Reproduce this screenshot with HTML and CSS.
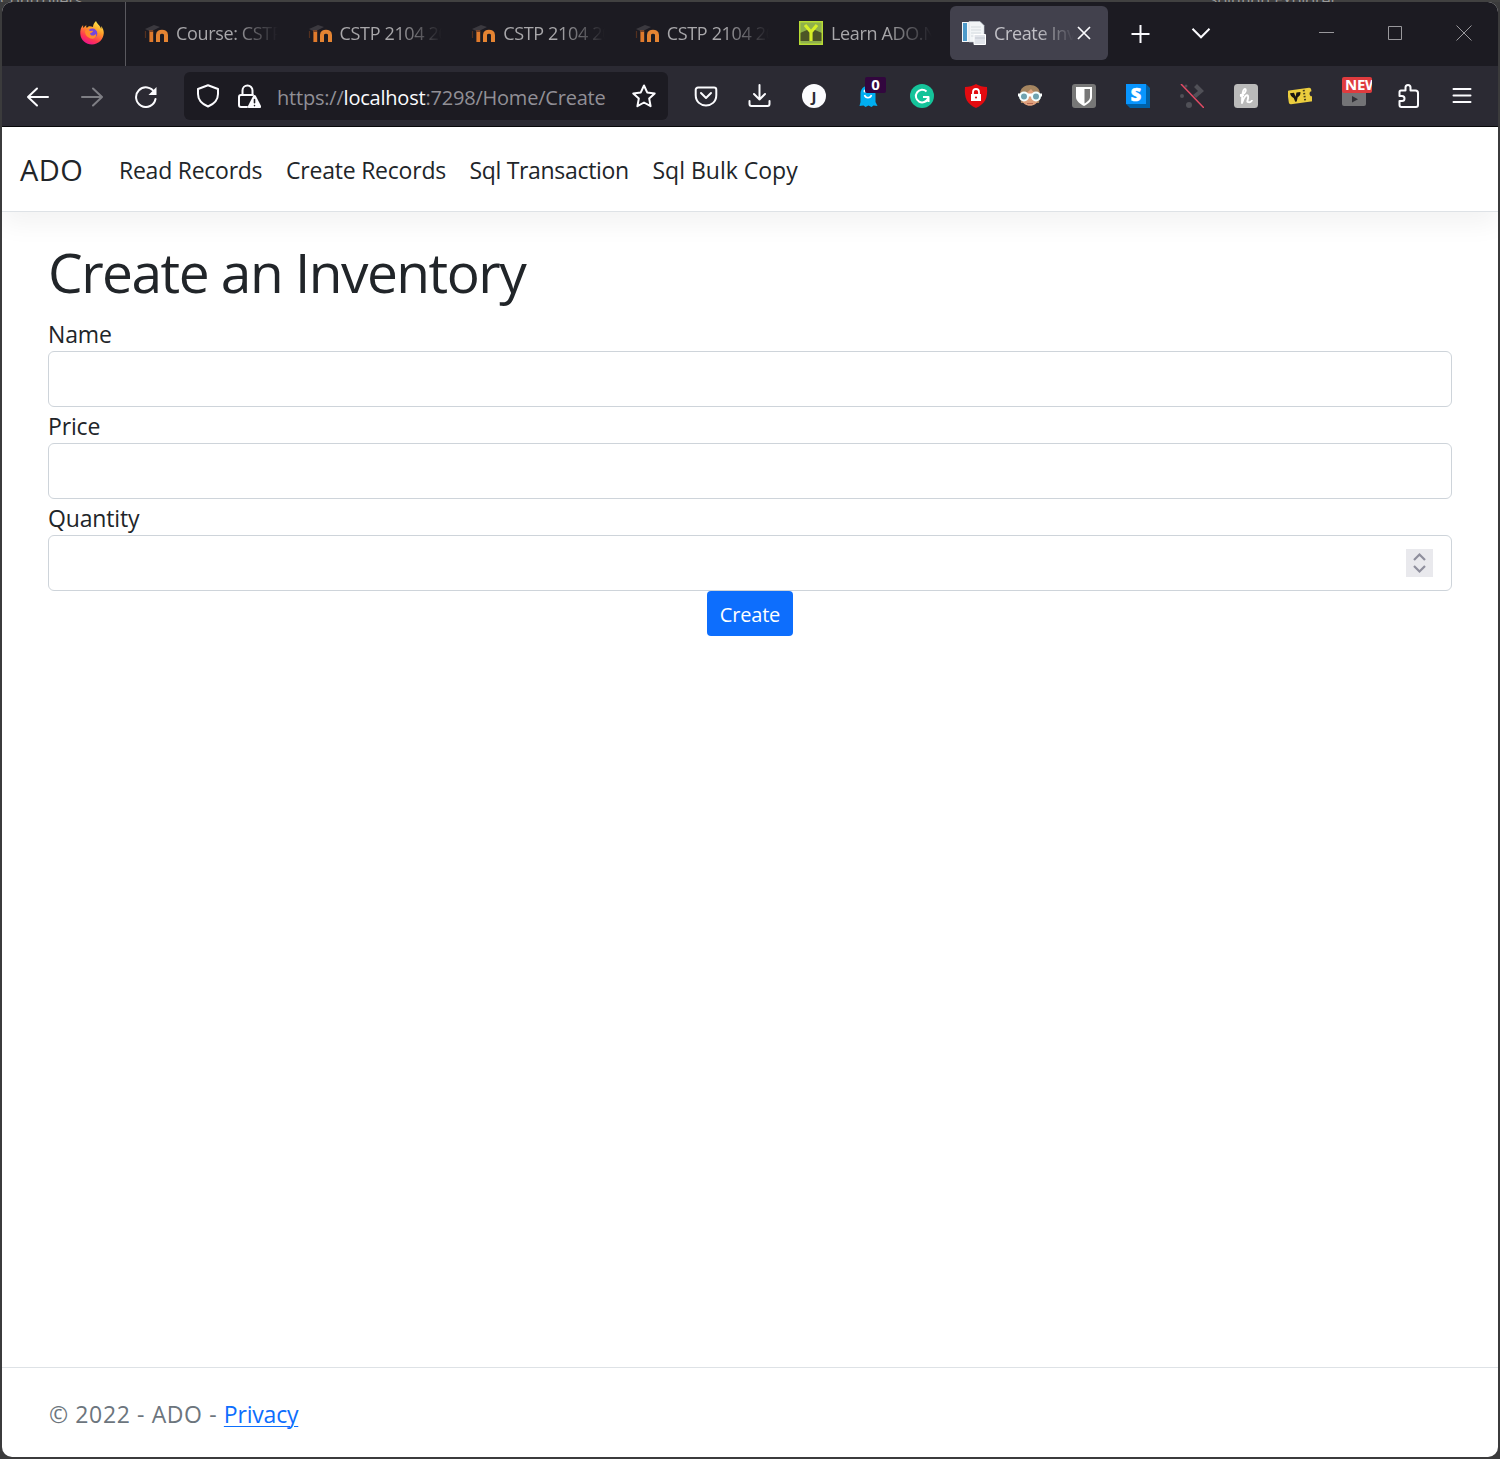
FILE: index.html
```html
<!DOCTYPE html>
<html lang="en">
<head>
<meta charset="utf-8">
<title>Create Inventory - ADO</title>
<link rel="stylesheet" href="styles.css">
</head>
<body>
<svg class="defs" width="0" height="0" aria-hidden="true">
  <symbol id="moodle" viewBox="0 0 24 24">
    <path d="M1 8 10 4l6 2-6 3-5 1z" fill="#3b393f"/><path d="M1.500 10v7" stroke="#54301f" stroke-width="1.200"/><path d="M7.300 10.500V21" stroke="#e07a2c" stroke-width="3.800"/><path d="M5 10h4.200" stroke="#7a4528" stroke-width="2"/>
    <path d="M14 21v-7c0-4.500 8-4.500 8 0v7" fill="none" stroke="#e58432" stroke-width="4"/>
  </symbol>
</svg>
<div class="desktop">
<div class="behind"><span>Controllers</span><span class="behind-right">Solution Explorer</span></div>
<div class="window">
  <div class="tabbar">
    <div class="pinned">
      <svg width="24" height="24" viewBox="0 0 24 24"><defs><linearGradient id="fx" x1=".8" y1="0" x2=".3" y2="1"><stop stop-color="#fff44f"/><stop offset=".4" stop-color="#ff9a28"/><stop offset=".75" stop-color="#ff3750"/><stop offset="1" stop-color="#eb1191"/></linearGradient></defs><path d="M16 0c-2 2-3 4-3 6-3-1-5-1-6 1-1-1-1-2-.5-3C5 5 4 6 3.500 7 3 6 3 5 3.200 4 1 6 0 9 .3 13c.5 6 5.500 10.500 11.700 10.500S23.500 18.500 23.800 12c0-3-1-5-2.800-7 .3 1 .4 2 .2 3C20 4 17 3 16 0z" fill="url(#fx)"/><circle cx="12.300" cy="12.500" r="5" fill="#7646dc"/><path d="M5 10c2-2 4-1 5 0l3-.3c0 2-3 2-3 3 1 3 5 2 6 0 1 5-4 6-7 4-3-1-4-4-4-6.700z" fill="#ff8b2b"/></svg>
    </div>
    <div class="tabs">
      <div class="tab"><svg class="fav"><use href="#moodle"/></svg><span>Course: CSTP 2104</span></div>
      <div class="tab"><svg class="fav"><use href="#moodle"/></svg><span>CSTP 2104 2022</span></div>
      <div class="tab"><svg class="fav"><use href="#moodle"/></svg><span>CSTP 2104 2022</span></div>
      <div class="tab"><svg class="fav"><use href="#moodle"/></svg><span>CSTP 2104 2022</span></div>
      <div class="tab learn"><svg class="fav" viewBox="0 0 24 24"><path fill="#8fb04c" d="M0 0h24v24H0z"/><path fill="#4c5526" d="M1 12 8 9h8l7 3v8H1z"/><path d="M6 4l6 7 6-7M12 10v10" fill="none" stroke="#d7ef27" stroke-width="3.200"/><path fill="none" stroke="#b8dc34" stroke-width="1.500" d="M.7.7h22.600v22.600H.7z"/></svg><span>Learn ADO.NET</span></div>
      <div class="tab active"><svg class="fav" viewBox="0 0 24 24"><path fill="#f5f8fa" d="M0 1h13v20H0z"/><path fill="#4d9aca" d="M1 2h4v18H1z"/><path fill="#f2f5f7" stroke="#c9d2d8" stroke-width=".6" d="M7 .5h11l4 4V21H7z"/><path stroke="#d5dbdf" d="M9 6h10M9 9h10M9 12h10M9 15h4"/><path fill="#e1e4ea" stroke="#fff" d="M12 13.500h11.500v10H12z"/><path stroke="#c3c8d0" d="M13 17h10"/></svg><span class="short">Create Inventory</span><svg class="tab-close" viewBox="0 0 14 14"><path d="M1 1l12 12M13 1 1 13"/></svg></div>
    </div>
    <div class="tab-tools"><svg width="20" height="20" viewBox="0 0 20 20"><path d="M10.500 1v18M1.500 10h18"/></svg><svg width="20" height="12" viewBox="0 0 20 12"><path d="m1.500 .8 8.500 8.500 8.500-8.500"/></svg></div>
    <div class="controls">
      <svg viewBox="0 0 16 16"><path d="M1 6.500h15"/></svg><svg viewBox="0 0 16 16"><path d="M1.500 .5h13v13h-13z"/></svg><svg viewBox="0 0 16 16"><path d="m.5-.5 15 15m0-15-15 15"/></svg>
    </div>
  </div>
  <div class="toolbar">
    <div class="cells">
      <svg viewBox="0 0 24 24"><path d="M22 13H2m9-8.500L2 13l9 8.500"/></svg>
      <svg class="dim" viewBox="0 0 24 24"><path d="M2 13h20m-9-8.500 9 8.500-9 8.500"/></svg>
      <svg viewBox="0 0 24 24"><path d="M20.500 8.500A9.800 9.800 0 1 0 21.500 15"/><path class="solid" d="M22.500 3v8H14.500z"/></svg>
    </div>
    <div class="url">
      <svg viewBox="0 0 24 24"><path d="M12 1.300 22 5v5c0 6-4 10-10 12.500C6 20 2 16 2 10V5z"/></svg>
      <svg viewBox="0 0 24 24"><path d="M5.500 11V6.500a5 5 0 0 1 10 0V11M10 23H4a2 2 0 0 1-2-2v-8a2 2 0 0 1 2-2h12"/><path class="solid" d="M17.500 11c.6 0 1 .3 1.300.8L24 22c.6 1.200 0 2-1 2H12c-1 0-1.600-.8-1-2l5.200-10.200c.3-.5.700-.8 1.300-.8z"/><path d="M17.500 15.500v3.300m0 2.700v.1" stroke="#1c1b22" stroke-width="1.600"/></svg>
      <span class="address">https://<b>localhost</b>:7298/Home/Create</span>
      <svg viewBox="0 0 24 24"><path d="m12 1.500 3.200 6.900 7.500 1-5.500 5.200 1.400 7.600-6.600-3.700-6.600 3.700 1.400-7.600L1.300 9.400l7.500-1z"/></svg>
    </div>
    <div class="cells">
      <svg viewBox="0 0 24 24"><path d="M4 3.500h16a2.300 2.300 0 0 1 2.300 2.300V11c0 14-20.600 14-20.600 0V5.800A2.300 2.300 0 0 1 4 3.500z"/><path d="m7 9 5 5 5-5"/></svg>
      <svg viewBox="0 0 24 24"><path d="M11.500 1v14.500M6 10l5.500 5.500L17 10M1.500 17v3a2 2 0 0 0 2 2h16a2 2 0 0 0 2-2v-3"/></svg>
      <span class="round-j">J</span>
      <span class="badged"><svg class="art" viewBox="0 0 24 24"><path d="M4.500 10c0-11 15-11 15 0v8l2 4-4-.5-2 1.500-3-1.500-3 1.500-2-1.500-4 .5 1-4z" fill="#00aef0"/><path d="M8.500 11c1 3.500 6 3.500 7 0" stroke="#fff" stroke-width="1.500" fill="none"/><circle cx="9" cy="7" r="1.500" fill="#fff"/></svg><em class="count">0</em></span>
      <svg class="art" viewBox="0 0 24 24"><circle cx="12" cy="12" r="12" fill="#15c39a"/><path d="M16.500 7.500a6.300 6.300 0 1 0 1.500 7M13 13h5.500v5" fill="none" stroke="#fff" stroke-width="2"/></svg>
      <svg class="art" viewBox="0 0 24 24"><path d="M12 0c3 2 7 3 11 3 1 11-2 17-11 21C3 20 0 14 1 3c4 0 8-1 11-3z" fill="#e30b10"/><path fill="#fff" d="M7 10h10v7H7z"/><path d="M9 10V8c0-4 6-4 6 0v2" fill="none" stroke="#fff" stroke-width="1.800"/><circle cx="12" cy="13.500" r="1.100" fill="#d51318"/></svg>
      <svg class="art" viewBox="0 0 24 24"><path d="M2 10C2-2 22-2 22 10l-1 9H3z" fill="#a58560"/><path d="M4 10c5-1 7-3 9-5 2 3 5 4 7 5v5c0 9-16 9-16 0z" fill="#dfa17d"/><path d="M0 11h24" stroke="#fff" stroke-width="3"/><circle cx="6" cy="12.500" r="4" fill="#6fa3b0" stroke="#f4ffff" stroke-width="2"/><circle cx="18" cy="12.500" r="4" fill="#6fa3b0" stroke="#f4ffff" stroke-width="2"/><path d="M9 19.500h6" stroke="#b86a52" stroke-width="1.200"/></svg>
      <svg class="art" viewBox="0 0 24 24"><rect width="24" height="24" rx="3" fill="#777"/><path d="M4 3h16v10c0 4-4 7-8 9-4-2-8-5-8-9z" fill="#fff"/><path d="M12.500 5H18v8c0 3-3 5-5.500 6.500z" fill="#777"/></svg>
      <svg class="art" viewBox="0 0 24 24"><path d="m20 0 4 4v20H4l-4-4z" fill="#0061a8"/><path d="M0 0h20v20H0z" fill="#0895ff"/><text x="10" y="16.500" text-anchor="middle" class="letter-s">S</text></svg>
      <svg class="art" viewBox="0 0 24 24"><g fill="#505057"><circle cx="2" cy="12" r="2"/><circle cx="6" cy="2" r="1.500"/><circle cx="9" cy="21" r="3"/><path d="m14 3 3-3 7 7-8 7-3-3 5-4z"/></g><path d="m1 0 23 24" stroke="#e44b65" stroke-width="1.500"/></svg>
      <svg class="art" viewBox="0 0 24 24"><rect width="24" height="24" rx="3.500" fill="#bababa"/><path d="M6 11c5 0 7-6 5-6-3 0-3 9-3 14 2-7 5-9 6-7 1 3-2 6 0 6 2 1 4-1 4-2M6 12l4-1" fill="none" stroke="#fff" stroke-width="1.900"/></svg>
      <svg class="art" viewBox="0 0 24 24"><g transform="rotate(-8 12 12)"><path d="M2 5h20a2 2 0 0 1 2 2v2c-3 0-3 5 0 5v3a2 2 0 0 1-2 2H2a2 2 0 0 1-2-2V7a2 2 0 0 1 2-2z" fill="#ebcd3e"/><path d="M16.500 6.500v11" stroke="#4b411b" stroke-dasharray="1.500 1.500"/><path d="M2.500 8h4l1 4 1.500-4h4c0 3-2 4-3.500 5L8 17H6.500l-1-4C4 12 2.500 11 2.500 8z" fill="#1b1713"/></g></svg>
      <span class="badged"><svg class="art" viewBox="0 0 24 24"><rect y="6" width="24" height="16" rx="2" fill="#737376"/><path d="m10 12 6 3.200-6 3.300z" fill="#303036"/></svg><em class="new">NEW</em></span>
      <svg viewBox="0 0 24 24"><path d="M3.500 10V8A1.500 1.500 0 0 1 5 6.500h4.500V3.500a2.500 2.500 0 0 1 5 0v3h5A2.500 2.500 0 0 1 22 9v12a2 2 0 0 1-2 2H5.500a2 2 0 0 1-2-2v-4H6a2.500 2.500 0 0 0 0-5H3.500z"/></svg>
      <svg viewBox="0 0 24 24"><path d="M3.500 5h17M3.500 11.500h17M3.500 18h17"/></svg>
    </div>
  </div>
  <div class="page">
    <nav class="navbar">
      <a class="brand">ADO</a>
      <a class="link read">Read Records</a><a class="link create">Create Records</a><a class="link trans">Sql Transaction</a><a class="link bulk">Sql Bulk Copy</a>
    </nav>
    <main>
      <h1>Create an Inventory</h1>
      <form>
        <label>Name</label><div class="field"></div>
        <label>Price</label><div class="field"></div>
        <label>Quantity</label><div class="field"><svg class="spinner" viewBox="0 0 27 28"><path d="m8 11 5.500-5.500L19 11M8 17l5.500 5.500L19 17"/></svg></div>
        <button type="button">Create</button>
      </form>
    </main>
    <footer><span class="copy">© 2022 - ADO - </span><a>Privacy</a></footer>
  </div>
</div>
</div>
</body>
</html>
```
FILE: styles.css
```css
* { box-sizing: border-box; }
body { margin: 0; font-family: "Open Sans", "Noto Sans", sans-serif; color: #212529; }
svg { display: block; flex: none; }
.defs { display: none; }
.desktop { height: 1459px; background: #3b3b3c; padding: 0 2px 2px; overflow: hidden; }
.behind { height: 2px; margin: 0 -2px; overflow: hidden; display: flex; justify-content: space-between; font-size: 16px; line-height: 0; color: #999; background: #414141; }
.behind-right { margin-right: 163px; }
.window { height: 1455px; border-radius: 10px; overflow: hidden; display: flex; flex-direction: column; background: #fff; }

.tabbar { height: 64px; background: #1c1b22; display: flex; }
.pinned { width: 124px; border-right: 1px solid #5a595f; padding: 19px 0 0 78px; }
.tabs { display: flex; padding: 4px 0 0 6px; }
.tab { width: 158px; height: 54px; margin-right: 5.6px; border-radius: 6px; padding: 0 12px; display: flex; align-items: center; color: #a8a7aa; }
.fav { width: 24px; height: 24px; margin-right: 8px; }
.learn { padding-left: 12.6px; }
.tab span { width: 102px; overflow: hidden; white-space: nowrap; font-size: 18px; letter-spacing: -0.35px; -webkit-mask-image: linear-gradient(90deg, #000 55%, transparent 100%); mask-image: linear-gradient(90deg, #000 55%, transparent 100%); }
.tab.active { background: #42414d; color: #c1c0c6; margin-right: 0; }
.tab span.short { width: 80px; flex: none; }
.tab-close { width: 14px; height: 14px; margin-left: 3px; fill: none; stroke: #fbfbfe; stroke-width: 1.7; }
.tab-tools { display: flex; align-items: center; gap: 41px; margin-left: 22px; fill: none; stroke: #fbfbfe; stroke-width: 2; }
.controls { display: flex; align-items: center; gap: 53px; margin: 0 26px 0 auto; }
.controls svg { width: 16px; height: 16px; fill: none; stroke: #99989c; overflow: visible; }

.toolbar { height: 61px; background: #2b2a33; border-bottom: 1px solid #09090b; display: flex; align-items: center; padding-left: 9px; }
.cells { display: flex; }
.cells > * { width: 24px; height: 24px; margin: 0 15px; flex: none; }
.toolbar svg { fill: none; stroke: #fbfbfe; stroke-width: 2; stroke-linecap: round; stroke-linejoin: round; }
.toolbar svg.art { stroke: none; stroke-linecap: butt; }
.toolbar .solid { fill: #fbfbfe; stroke: none; }
.toolbar .dim { opacity: .4; }
.url { width: 484px; height: 48px; margin: 0 11px; padding: 0 12px; background: #1c1b22; border-radius: 6px; display: flex; align-items: center; }
.url svg { width: 24px; height: 24px; margin-right: 17px; }
.url svg:last-child { margin: 0 0 0 auto; }
.address { font-size: 20px; white-space: nowrap; color: #918f96; margin-left: -1px; padding-top: 2px; letter-spacing: -0.21px; }
.address b { font-weight: 400; color: #fbfbfe; }
.round-j { border-radius: 50%; background: #fbfbfe; color: #2b2a33; font-size: 15px; font-weight: 700; line-height: 24px; text-align: center; }
.badged { position: relative; }
.badged svg { width: 24px; height: 24px; }
.badged em { position: absolute; top: -7px; height: 16px; border-radius: 2px; color: #fff; font-style: normal; font-weight: 700; font-size: 15px; line-height: 15px; text-align: center; overflow: hidden; }
.count { left: 9px; width: 21px; background: #32063e; }
.new { left: 0; width: 30px; padding-left: 3px; background: #df3b3e; letter-spacing: -.3px; }
.badged em.new { text-align: left; }
.letter-s { font: 800 18px "Open Sans", sans-serif; fill: #fff; stroke: #fff; stroke-width: .6px; }

.page { flex: 1; display: flex; flex-direction: column; }
.navbar { height: 85px; border-bottom: 1px solid #dee2e6; box-shadow: 0 12px 24px rgba(0,0,0,.05); display: flex; align-items: center; padding: 2px 0 0 18px; }
.brand { width: 99px; font-size: 29px; letter-spacing: .4px; margin-top: -2px; }
.link { font-size: 23px; white-space: nowrap; }
.read { width: 167px; letter-spacing: -0.25px; }
.create { width: 183.5px; letter-spacing: -0.22px; }
.trans { width: 183px; letter-spacing: -0.32px; }
main { padding: 24px 46px 0; flex: 1; }
h1 { font-size: 55px; line-height: 72px; font-weight: 400; margin: 0 0 11px; white-space: nowrap; letter-spacing: -1.5px; }
form { display: flex; flex-direction: column; }
label { font-size: 23px; line-height: 31px; height: 32px; letter-spacing: -0.15px; }
.field { height: 56px; margin-bottom: 4px; border: 1px solid #ced4da; border-radius: 6px; display: flex; align-items: center; justify-content: flex-end; padding-right: 18px; }
.field:last-of-type { margin-bottom: 0; }
.spinner { width: 27px; height: 28px; background: #e9e9ed; fill: none; stroke: #8f8f9d; stroke-width: 2.2; }
button { align-self: center; width: 86px; height: 45px; border: 0; border-radius: 4px; background: #0d6efd; color: #fff; font: 20px "Open Sans", sans-serif; letter-spacing: -0.2px; padding: 2px 0 0; }
footer { height: 90px; border-top: 1px solid #dee2e6; padding: 2px 46px 0 47px; display: flex; align-items: center; font-size: 23px; color: #6c757d; white-space: pre; }
.copy { letter-spacing: .62px; }
footer a { color: #0d6efd; letter-spacing: -0.2px; text-decoration: underline; text-decoration-thickness: 1px; text-underline-offset: 3px; }
```
